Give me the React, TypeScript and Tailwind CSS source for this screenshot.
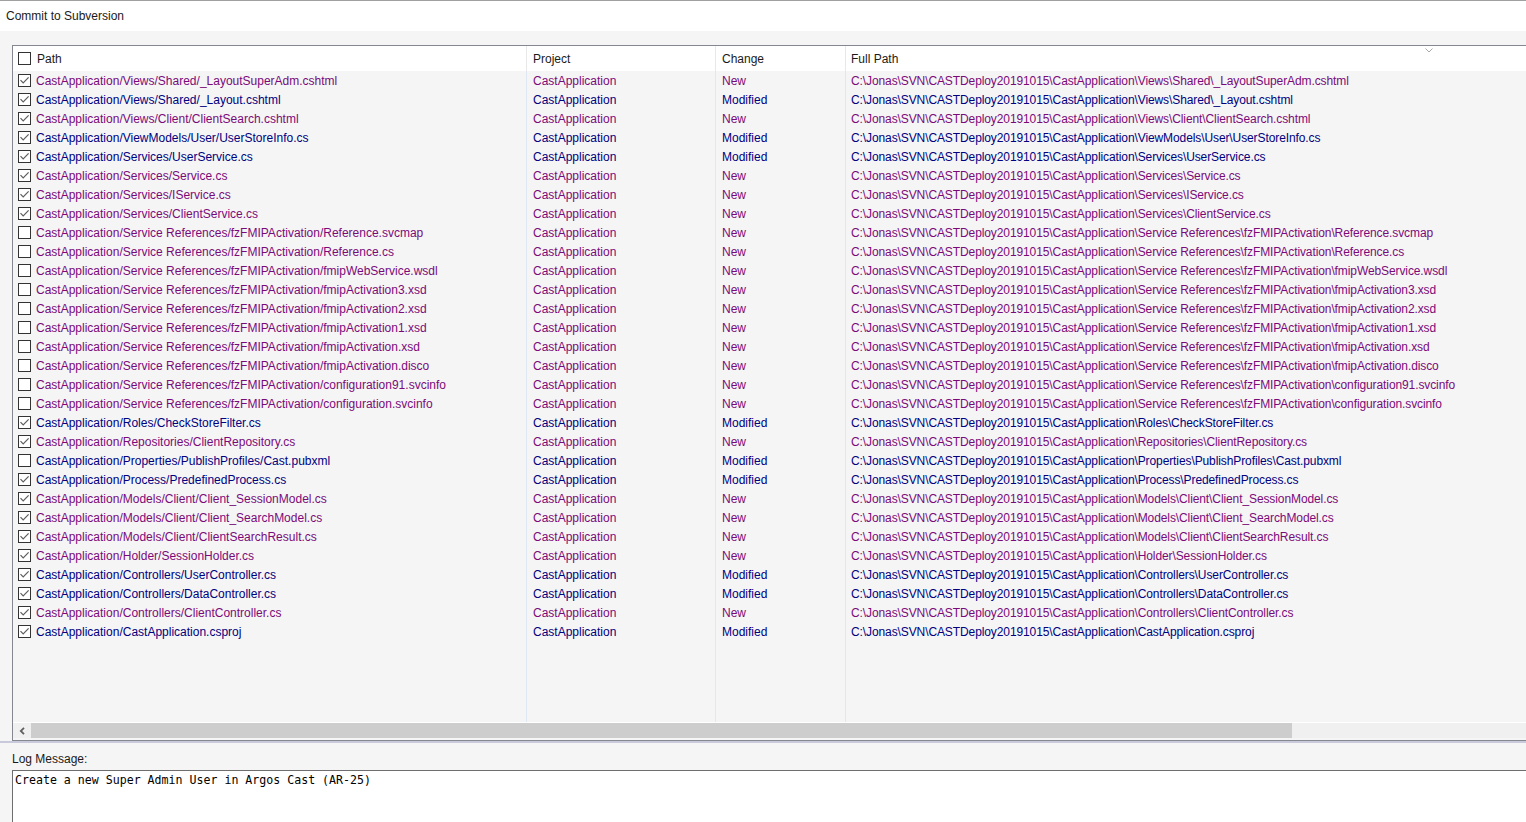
type Change = 'New' | 'Modified';

// [relative path, checked, change]
const files: [string, boolean, Change][] = [
  ['Views/Shared/_LayoutSuperAdm.cshtml', true, 'New'],
  ['Views/Shared/_Layout.cshtml', true, 'Modified'],
  ['Views/Client/ClientSearch.cshtml', true, 'New'],
  ['ViewModels/User/UserStoreInfo.cs', true, 'Modified'],
  ['Services/UserService.cs', true, 'Modified'],
  ['Services/Service.cs', true, 'New'],
  ['Services/IService.cs', true, 'New'],
  ['Services/ClientService.cs', true, 'New'],
  ['Service References/fzFMIPActivation/Reference.svcmap', false, 'New'],
  ['Service References/fzFMIPActivation/Reference.cs', false, 'New'],
  ['Service References/fzFMIPActivation/fmipWebService.wsdl', false, 'New'],
  ['Service References/fzFMIPActivation/fmipActivation3.xsd', false, 'New'],
  ['Service References/fzFMIPActivation/fmipActivation2.xsd', false, 'New'],
  ['Service References/fzFMIPActivation/fmipActivation1.xsd', false, 'New'],
  ['Service References/fzFMIPActivation/fmipActivation.xsd', false, 'New'],
  ['Service References/fzFMIPActivation/fmipActivation.disco', false, 'New'],
  ['Service References/fzFMIPActivation/configuration91.svcinfo', false, 'New'],
  ['Service References/fzFMIPActivation/configuration.svcinfo', false, 'New'],
  ['Roles/CheckStoreFilter.cs', true, 'Modified'],
  ['Repositories/ClientRepository.cs', true, 'New'],
  ['Properties/PublishProfiles/Cast.pubxml', false, 'Modified'],
  ['Process/PredefinedProcess.cs', true, 'Modified'],
  ['Models/Client/Client_SessionModel.cs', true, 'New'],
  ['Models/Client/Client_SearchModel.cs', true, 'New'],
  ['Models/Client/ClientSearchResult.cs', true, 'New'],
  ['Holder/SessionHolder.cs', true, 'New'],
  ['Controllers/UserController.cs', true, 'Modified'],
  ['Controllers/DataController.cs', true, 'Modified'],
  ['Controllers/ClientController.cs', true, 'New'],
  ['CastApplication.csproj', true, 'Modified'],
];

function CheckBox({ checked }: { checked: boolean }) {
  return (
    <span className="w-[13px] h-[13px] shrink-0 border border-[#333333] bg-white flex items-center justify-center">
      {checked && (
        <svg width="11" height="11" viewBox="0 0 11 11">
          <path d="M1.5 5.2 L4.2 8 L9.6 2.4" stroke="#5e5e5e" strokeWidth="1.2" fill="none" />
        </svg>
      )}
    </span>
  );
}

export default function App() {
  return (
    <div className="w-[1526px] h-[822px] overflow-hidden bg-[#f5f5f5] flex flex-col text-[12px] text-[#1a1a1a] font-['Liberation_Sans',Arial,sans-serif]">
      {/* title bar */}
      <div className="h-[31px] shrink-0 border-t border-[#a0a0a0] bg-white pl-[6px] flex items-center">
        Commit to Subversion
      </div>

      {/* file list */}
      <div className="pl-[12px] pt-[14px] shrink-0">
        <div className="w-[1530px] h-[696px] border-t border-l border-b border-[#868890] flex flex-col">
          {/* header */}
          <div className="relative h-[25px] shrink-0 bg-white flex items-center">
            <div className="w-[514px] h-full border-r border-[#e8e8e8] pl-[5px] flex items-center gap-[6px]">
              <CheckBox checked={false} />
              <span>Path</span>
            </div>
            <div className="w-[189px] h-full border-r border-[#e8e8e8] pl-[6px] flex items-center">Project</div>
            <div className="w-[130px] h-full border-r border-[#e8e8e8] pl-[6px] flex items-center">Change</div>
            <div className="flex-1 h-full pl-[5px] flex items-center">Full Path</div>
            <svg className="absolute left-[1412px] top-[2px]" width="8" height="5" viewBox="0 0 8 5">
              <path d="M0.5 0.5 L4 4 L7.5 0.5" stroke="#a8a8a8" strokeWidth="1" fill="none" />
            </svg>
          </div>

          {/* rows */}
          <div className="flex-1 flex flex-col">
            {files.map(([rel, checked, change]) => {
              const color = change === 'New' ? 'text-[#7a0a7a]' : 'text-[#000080]';
              return (
                <div key={rel} className={`h-[19px] shrink-0 flex items-center whitespace-nowrap ${color}`}>
                  <div className="w-[514px] h-full border-r border-[#dfe8f3] pl-[5px] flex items-center gap-[5px] overflow-hidden">
                    <CheckBox checked={checked} />
                    <span>CastApplication/{rel}</span>
                  </div>
                  <div className="w-[189px] h-full border-r border-[#dfe8f3] pl-[6px] flex items-center">CastApplication</div>
                  <div className="w-[130px] h-full border-r border-[#dfe8f3] pl-[6px] flex items-center">{change}</div>
                  <div className="flex-1 h-full pl-[5px] flex items-center tracking-[-0.1px]">
                    C:\Jonas\SVN\CASTDeploy20191015\CastApplication\{rel.split('/').join('\\')}
                  </div>
                </div>
              );
            })}
            <div className="flex-1 flex">
              <div className="w-[514px] border-r border-[#dfe8f3]" />
              <div className="w-[189px] border-r border-[#dfe8f3]" />
              <div className="w-[130px] border-r border-[#dfe8f3]" />
              <div className="flex-1" />
            </div>
          </div>

          {/* horizontal scrollbar */}
          <div className="h-[18px] shrink-0 flex flex-col">
            <div className="h-px bg-white" />
            <div className="h-[15px] flex bg-[#f0f0f0]">
              <div className="w-[18px] flex items-center justify-center">
                <svg width="7" height="8" viewBox="0 0 7 8">
                  <path d="M5 0.8 L1.8 4 L5 7.2" stroke="#606060" strokeWidth="1.8" fill="none" />
                </svg>
              </div>
              <div className="w-[1261px] bg-[#cdcdcd]" />
            </div>
          </div>
        </div>
        <div className="h-[2px] bg-[#c8cadb] -ml-[12px] w-[1540px]" />
      </div>

      {/* log message */}
      <div className="pl-[12px] pt-[8px] shrink-0 leading-[16px]">Log Message:</div>
      <div className="pl-[12px] pt-[3px] flex-1 flex">
        <div className="flex-1 border-t border-l border-[#6e6e6e] bg-white pl-[2px] pt-[1px] leading-[16px] text-[11.6px] text-black font-['DejaVu_Sans_Mono','Liberation_Mono',monospace]">
          Create a new Super Admin User in Argos Cast (AR-25)
        </div>
      </div>
    </div>
  );
}
